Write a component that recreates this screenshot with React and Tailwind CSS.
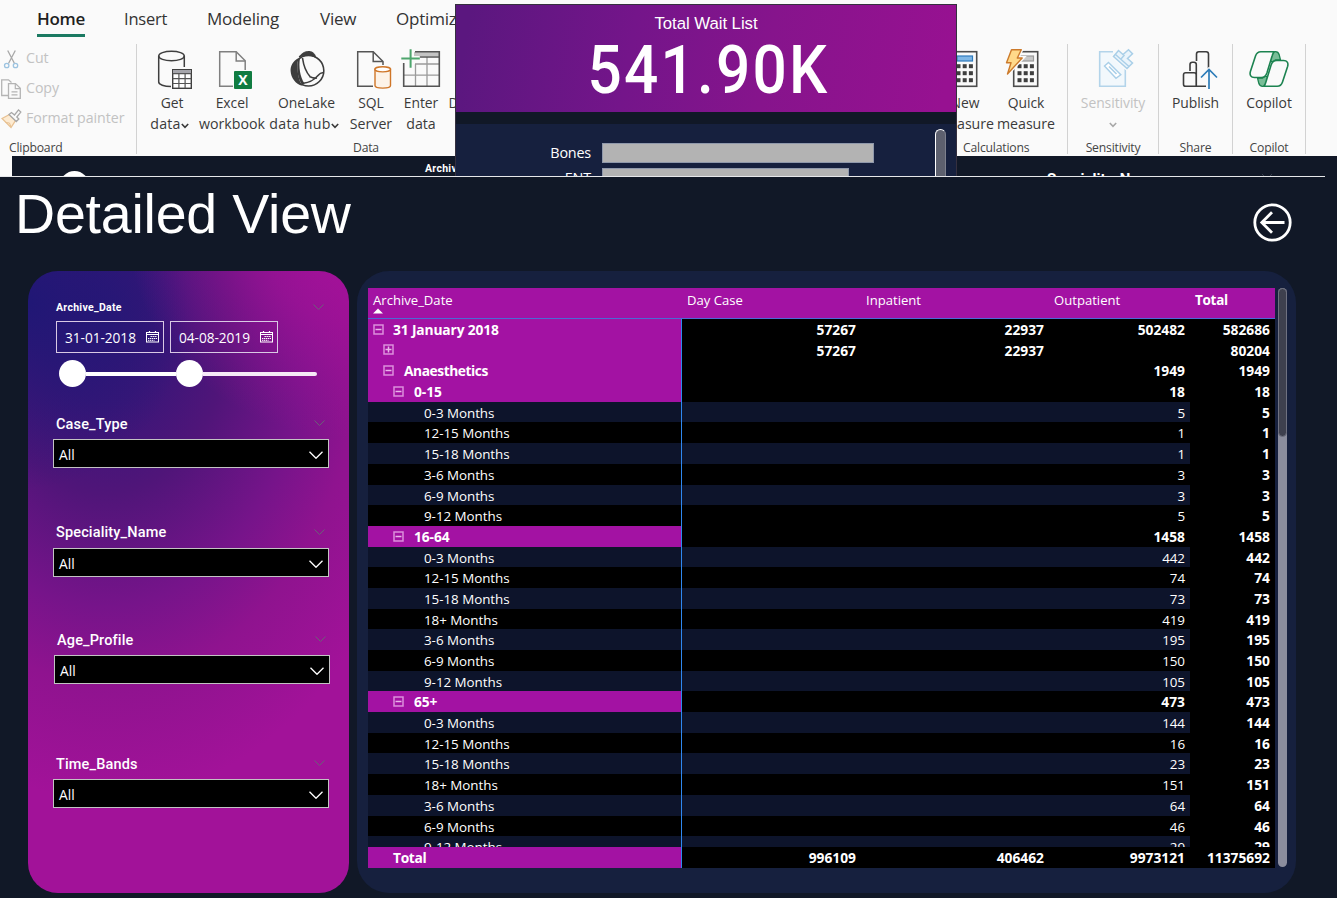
import React from "react";

const RIBBON_FONT = "font-['Open_Sans','Noto_Sans',sans-serif]";
const DIN_FONT = "font-['Roboto','Open_Sans',sans-serif]";

function Icon({ children, size = 40, className = "" }) {
  return (
    <svg width={size} height={size} viewBox={`0 0 ${size} ${size}`} fill="none" className={`shrink-0 overflow-visible ${className}`}>
      {children}
    </svg>
  );
}

function CutIcon() {
  return (
    <Icon size={20}>
      <path d="M6.700 1.500 13.500 14.500M14.300 1.500 7.500 14.500" stroke="#a8a8a8" strokeWidth="1.300" />
      <circle cx="5.700" cy="16.500" r="2.200" stroke="#9cc3e0" strokeWidth="1.300" />
      <circle cx="14.500" cy="16.500" r="2.200" stroke="#9cc3e0" strokeWidth="1.300" />
    </Icon>
  );
}

function CopyIcon() {
  return (
    <Icon size={20}>
      <path d="M7.500 16.500H.7V.8h6.800l3 2.600" stroke="#b4b4b4" strokeWidth="1.300" />
      <path d="M7.500 4.600h7l4.800 4.700v10H7.500z" fill="#fafafa" stroke="#b4b4b4" strokeWidth="1.300" />
      <path d="M14.300 4.800v4.800h4.900M10.500 12.800h6M10.500 15.800h6" stroke="#b4b4b4" strokeWidth="1.200" />
    </Icon>
  );
}

function BrushIcon() {
  return (
    <Icon size={20}>
      <path d="M1 9.500 8.500 5.500l6 6-4.500 7z" fill="#fdebd2" stroke="#e8c192" strokeWidth="1.300" />
      <path d="m4.500 13.500 4 .500 1.500 4" stroke="#e8c192" />
      <path d="m8 5.500 2.500-2 3 2.500L17.500.9l2.300 2.200-4 4.900 2 2-2.500 2.500z" fill="#fafafa" stroke="#a8a8a8" strokeWidth="1.300" />
    </Icon>
  );
}

function GetDataIcon() {
  return (
    <Icon>
      <path d="M19 37.500C12 37.500 6.700 35.500 6.700 33V7M32.300 7v11" stroke="#3f3f3f" strokeWidth="1.500" />
      <ellipse cx="19.500" cy="7" rx="12.800" ry="4.800" stroke="#3f3f3f" strokeWidth="1.500" />
      <rect x="20.700" y="20.700" width="18.600" height="18.600" fill="#fff" stroke="#3f3f3f" strokeWidth="1.400" />
      <path d="M21 21h18v3.500H21z" fill="#a5a5ab" />
      <path d="M20.700 24.700h18.600M20.700 29.600h18.600M20.700 34.500h18.600M26.900 24.700v14.500M33.100 24.700v14.500" stroke="#555" strokeWidth="1.200" />
    </Icon>
  );
}

function ExcelIcon() {
  return (
    <Icon>
      <path d="M21 37.300H7.700V2.700h16.500l9 9V21" stroke="#808080" strokeWidth="1.500" />
      <path d="M24.200 2.700v9.200h9" stroke="#808080" strokeWidth="1.500" />
      <rect x="22" y="22" width="18" height="18" rx="1" fill="#107c41" />
      <text x="31" y="36" textAnchor="middle" fill="#fff" fontFamily="Open Sans" fontWeight="700" fontSize="14">X</text>
    </Icon>
  );
}

function OneLakeIcon() {
  return (
    <Icon>
      <path d="M11 9.500C6 12 3.300 17 3.600 22c.3 7 5 13 11.500 14.800-3.800-5.600-5.600-17.600-4.100-27.300z" fill="#3d3d3d" />
      <path d="M12 8C15 4 18 2.500 22 2.500c4 0 6.500 3 6.500 6-4-3-11-3-16.500-.500z" fill="#3d3d3d" stroke="#3d3d3d" />
      <circle cx="21.500" cy="21.700" r="15.300" stroke="#3d3d3d" strokeWidth="1.600" />
      <path d="M11 10c-1.500 9-.5 20 4.500 26.500l2-2C13 28 11.500 18 13 9z" fill="#3d3d3d" />
      <path d="M15.500 9c1 7 3 13.500 7.500 18.500M15 34.500c9-1 12.500-4 16-8 2-2.200 3.300-3.500 5.800-2.500M22.500 27.500c2 1 4.500 2 7.500 1.500" stroke="#3d3d3d" strokeWidth="1.600" />
    </Icon>
  );
}

function SqlIcon() {
  return (
    <Icon>
      <path d="M22 37.300H6.700V2.700h15.500L32 12.500V16" stroke="#555" strokeWidth="1.500" />
      <path d="M22.200 2.700v9.800H32" stroke="#555" strokeWidth="1.500" />
      <path d="M24 20.300v16.200c0 3.500 15.500 3.500 15.500 0V20.300z" fill="#fdf3e8" stroke="#cf7628" strokeWidth="1.400" />
      <ellipse cx="31.700" cy="20.300" rx="7.800" ry="2.600" fill="#fff" stroke="#cf7628" strokeWidth="1.400" />
    </Icon>
  );
}

function EnterDataIcon() {
  return (
    <Icon>
      <path d="M13 3h25v4H13z" fill="#c4c4c4" />
      <path d="M14 15h24M3 26.200h35M14.500 15v22.500M26 8v29.500" stroke="#9b9b9b" strokeWidth="1.300" />
      <path d="M14 2.700h24.300v34.600H2.700V14M13 8h25" stroke="#555" strokeWidth="1.600" />
      <path d="M9.600.3v18.500M.3 9.600h18.500" stroke="#fafafa" strokeWidth="5" />
      <path d="M9.600.3v18.500M.3 9.600h18.500" stroke="#4ea56d" strokeWidth="2" />
    </Icon>
  );
}

function CalculatorShape({ blue }) {
  return (
    <>
      <rect x="7.700" y="2.700" width="24" height="34.600" fill="#fafafa" stroke="#4c4c4c" strokeWidth="1.600" />
      <rect x="12" y="7" width="15.500" height="5" fill={blue ? "#7fb7e6" : "#c8c8c8"} stroke={blue ? "#2f7bbd" : "#9a9a9a"} strokeWidth="1.200" />
      {[15.200, 22.200, 29.200].map((y) =>
        [11.500, 17.700, 23.900].map((x) => <rect key={`${x}-${y}`} x={x} y={y} width="4" height="4" fill="#3f3f3f" />)
      )}
    </>
  );
}

function NewMeasureIcon() {
  return (
    <Icon>
      <CalculatorShape blue />
    </Icon>
  );
}

function QuickMeasureIcon() {
  return (
    <Icon>
      <CalculatorShape />
      <path d="M5.500.7h9.800l-4 8.300h4.900L1.500 25 5 13.700H.5z" fill="#fafafa" stroke="#fafafa" strokeWidth="4" />
      <path d="M5.500.7h9.800l-4 8.300h4.900L1.500 25 5 13.700H.5z" fill="#ffd98a" stroke="#cc7a2b" strokeWidth="1.400" strokeLinejoin="round" />
    </Icon>
  );
}

function SensitivityIcon() {
  return (
    <Icon>
      <path d="M20 2.700H6.700v34.600h25.600V20" stroke="#b3d4ea" strokeWidth="1.600" fill="#f2f8fc" />
      <path d="m15.500 13.500 12.300 12.200-4.800 3.500L11.500 17z" fill="#fff" stroke="#a9cfe8" strokeWidth="1.400" />
      <path d="m16 17.500 7.500 7.500" stroke="#a9cfe8" strokeWidth="1.600" />
      <path d="M20.500 7.500 34 19.500l5.500-5.500-5-4.500 5-4.800L35.500.8 30 5.500 25.500 1.500z" fill="#fafafa" stroke="#fafafa" strokeWidth="4" />
      <path d="M20.500 7.500 34 19.500l5.500-5.500-5-4.500 5-4.800L35.500.8 30 5.500 25.500 1.500z" fill="#eaf4fb" stroke="#a9cfe8" strokeWidth="1.500" />
      <path d="m22.500 5.500 13.500 12M27.500 10.500l4-4.500" stroke="#a9cfe8" strokeWidth="1.400" />
    </Icon>
  );
}

function PublishIcon() {
  return (
    <Icon>
      <path d="M20.500 12V5c0-1.500.8-2.300 2.300-2.300h7.400c1.500 0 2.300.8 2.300 2.300v15M14 22V15.500c0-1.500.8-2.300 2.300-2.300H18c1.500 0 2.300.8 2.300 2.300V37.300M20.200 37.300V25.800c0-1.300-.8-2.100-2.200-2.100H9.700c-1.400 0-2.200.8-2.200 2.100v9.400c0 1.300.8 2.100 2.200 2.100H30" stroke="#3d3d3d" strokeWidth="1.600" />
      <path d="M33 40V21M25 28.500l8-8 8 8" stroke="#fafafa" strokeWidth="4" />
      <path d="M33 40V21M25 28.500l8-8 8 8" stroke="#2d7cb8" strokeWidth="1.700" />
    </Icon>
  );
}

function CopilotIcon() {
  return (
    <Icon>
      <path d="M20.500 11.500 23 2.700h3.500c2 0 3 .8 3.700 3l1.300 5.300h-5l-3 2z" fill="#79bd97" stroke="#1c8350" strokeWidth="1.300" />
      <path d="M19.500 28.500 17 37.300h-3.500c-2 0-3-.8-3.700-3L8.500 29h5l3-2z" fill="#79bd97" stroke="#1c8350" strokeWidth="1.300" />
      <path d="M25.500 2.700H11.800C9 2.700 7.500 4 6.500 7L1.400 22.500c-1 3.500.5 6 4 6h7c3 0 4.500-1.500 5.500-4.500l5.200-17c.7-2.500 1.100-3.800 2.400-4.300z" fill="#fafafa" stroke="#1c8350" strokeWidth="1.600" />
      <path d="M14.500 37.300h13.700c2.800 0 4.300-1.300 5.300-4.300l5.100-15.500c1-3.500-.5-6-4-6h-7c-3 0-4.500 1.500-5.500 4.500l-5.200 17c-.7 2.500-1.100 3.800-2.400 4.300z" fill="#fafafa" stroke="#1c8350" strokeWidth="1.600" />
    </Icon>
  );
}

function Caret({ className = "" }) {
  return (
    <svg width="8" height="6" viewBox="0 0 8 6" fill="none" className={`shrink-0 ${className}`}>
      <path d="M.8 1 4 4.300 7.200 1" stroke="currentColor" strokeWidth="1.600" />
    </svg>
  );
}

function RibbonItem({ icon, line1, line2, caret, width, muted }) {
  return (
    <div className={`flex shrink-0 flex-col items-center ${width} ${muted ? "text-[#c2c2c2]" : "text-[#3a3a3a]"}`}>
      {icon}
      <span className="mt-[3px] h-[21px] text-[13.9px] leading-[21px] tracking-[-0.05px] whitespace-nowrap">{line1}</span>
      <span className={`mt-px flex h-[20px] items-center text-[14.2px] leading-[20px] whitespace-nowrap ${caret && !muted ? "-ml-[5px] tracking-[0.25px]" : "tracking-[-0.02px]"}`}>
        {line2}
        {caret && <Caret className={muted ? "mt-px text-[#a8a8a8]" : "mt-[4px]"} />}
      </span>
    </div>
  );
}

function RibbonGroup({ width, label, children, labelClass = "text-center" }) {
  return (
    <div className={`flex h-[110px] shrink-0 flex-col border-r border-[#d2d2d2] ${width}`}>
      <div className="flex h-[94px] pt-[5px]">{children}</div>
      <div className={`h-[16px] text-[12.2px] leading-[19px] tracking-[-0.2px] whitespace-nowrap text-[#444] ${labelClass}`}>{label}</div>
    </div>
  );
}

function ClipboardRow({ icon, text }) {
  return (
    <div className="flex h-[30px] items-center gap-[5px] pl-px text-[14.2px] tracking-[-0.05px] whitespace-nowrap text-[#c2c2c2]">
      {icon}
      <span className="pb-[2px]">{text}</span>
    </div>
  );
}

function Ribbon() {
  return (
    <div className={`flex h-[156px] flex-col bg-[#fafafa] ${RIBBON_FONT}`}>
      <div className="flex h-[44px] pl-[37px] text-[17px] leading-[38px] tracking-[-0.2px] text-[#333]">
        <div className="flex w-[87px] flex-col">
          <span className="h-[34px] font-semibold tracking-[-0.3px] text-[#1f1f1f]">Home</span>
          <span className="h-[3px] w-[48px] bg-[#1b7a62]" />
        </div>
        <span className="w-[83px] text-[16.5px]">Insert</span>
        <span className="w-[113px]">Modeling</span>
        <span className="w-[76px]">View</span>
        <span>Optimize</span>
      </div>
      <div className="flex">
        <RibbonGroup width="w-[137px]" label="Clipboard" labelClass="pl-[9px]">
          <div className="-mt-[5px] flex flex-col">
            <ClipboardRow icon={<CutIcon />} text="Cut" />
            <ClipboardRow icon={<CopyIcon />} text="Copy" />
            <ClipboardRow icon={<BrushIcon />} text="Format painter" />
          </div>
        </RibbonGroup>
        <RibbonGroup width="w-[743px]" label="Data" labelClass="pl-[216px]">
          <div className="w-[5px]" />
          <RibbonItem width="w-[60px]" icon={<GetDataIcon />} line1="Get" line2="data" caret />
          <RibbonItem width="w-[60px]" icon={<ExcelIcon />} line1="Excel" line2="workbook" />
          <RibbonItem width="w-[89px]" icon={<OneLakeIcon />} line1="OneLake" line2="data hub" caret />
          <RibbonItem width="w-[40px]" icon={<SqlIcon />} line1="SQL" line2="Server" />
          <RibbonItem width="w-[60px]" icon={<EnterDataIcon />} line1="Enter" line2="data" />
          <RibbonItem width="w-[60px]" icon={<Icon />} line1="Dataverse" line2="" />
        </RibbonGroup>
        <RibbonGroup width="w-[188px]" label="Calculations" labelClass="pl-[83px]">
          <div className="w-[55px]" />
          <RibbonItem width="w-[60px]" icon={<NewMeasureIcon />} line1="New" line2="measure" />
          <RibbonItem width="w-[62px]" icon={<QuickMeasureIcon />} line1="Quick" line2="measure" />
        </RibbonGroup>
        <RibbonGroup width="w-[91px]" label="Sensitivity">
          <RibbonItem width="w-[90px]" icon={<SensitivityIcon />} line1="Sensitivity" line2="" caret muted />
        </RibbonGroup>
        <RibbonGroup width="w-[74px]" label="Share">
          <RibbonItem width="w-[73px]" icon={<PublishIcon />} line1="Publish" line2="" />
        </RibbonGroup>
        <RibbonGroup width="w-[73px]" label="Copilot">
          <RibbonItem width="w-[72px]" icon={<CopilotIcon />} line1="Copilot" line2="" />
        </RibbonGroup>
      </div>
    </div>
  );
}

function ReportStrip() {
  return (
    <div className={`flex h-[21px] flex-col bg-[#111827] ${DIN_FONT}`}>
      <div className="flex h-[20px] overflow-hidden">
        <div className="w-[12px] shrink-0 bg-[#fafafa]" />
        <div className="mt-[15px] ml-[48px] h-[30px] w-[29px] shrink-0 rounded-full bg-white" />
        <span className="w-[622px] shrink-0 pl-[336px] text-[10.5px] leading-[25px] font-bold tracking-[0.3px] text-white">Archive_Date</span>
        <span className="mt-[12px] ml-[336px] w-[214px] shrink-0 text-[15px] leading-[22px] font-bold text-white">Speciality_Name</span>
        <svg width="12" height="8" viewBox="0 0 12 8" fill="none" className="mt-[16px]">
          <path d="m1 2 5 5 5-5" stroke="#3a4150" />
        </svg>
      </div>
      <div className="h-px w-[1325px] bg-[#e6e7ea]" />
    </div>
  );
}

function WaitListCard() {
  return (
    <div className="absolute top-[4px] left-[455px] flex h-[172px] w-[502px] flex-col overflow-hidden border-x border-t border-[#35303f] bg-[#16203e]">
      <div className="flex h-[107px] shrink-0 flex-col items-center bg-linear-[100deg,#5b177f_3%,#74158a_35%,#86148c_62%,#971191_97%] text-white">
        <span className="mt-[9px] font-['Liberation_Sans',Arial,sans-serif] text-[16.8px] leading-[20px] tracking-[-0.05px]">Total Wait List</span>
        <span className={`-mt-px ml-[5px] scale-x-[0.9] text-[67px] leading-[74px] font-medium tracking-[2.500px] whitespace-nowrap ${DIN_FONT}`}>541.90K</span>
      </div>
      <div className="h-[12px] shrink-0 bg-[#111827]" />
      <div className={`flex text-[14.4px] leading-[20px] text-white ${RIBBON_FONT}`}>
        <div className="flex w-[479px] shrink-0 flex-col gap-[5px] pt-[19px]">
          <div className="flex h-[20px] shrink-0 gap-[11px]">
            <span className="w-[135px] text-right tracking-[-0.2px]">Bones</span>
            <span className="h-[20px] w-[272px] border border-[#8f98ab] bg-[#b3b3b3]" />
          </div>
          <div className="flex h-[20px] shrink-0 gap-[11px]">
            <span className="w-[135px] text-right tracking-[-0.2px]">ENT</span>
            <span className="h-[20px] w-[247px] border border-[#8f98ab] bg-[#b3b3b3]" />
          </div>
        </div>
        <div className="mt-[5px] h-[80px] w-[11px] rounded-t-full border border-white border-r-[#7d808d] bg-[#5d606e]" />
      </div>
    </div>
  );
}

function Chevron({ className = "" }) {
  return (
    <svg width="14" height="8" viewBox="0 0 14 8" fill="none" className={`shrink-0 ${className}`}>
      <path d="m.5.8 6.500 6.500L13.500.8" stroke="currentColor" strokeWidth="1.300" />
    </svg>
  );
}

function FaintChevron() {
  return (
    <svg width="11" height="6" viewBox="0 0 11 6" fill="none" className="shrink-0 text-[#6b5f78]">
      <path d="m.5.500 5 5 5-5" stroke="currentColor" />
    </svg>
  );
}

function CalendarIcon() {
  return (
    <svg width="13" height="12" viewBox="0 0 13 12" fill="none" className="shrink-0">
      <rect x=".5" y="1.500" width="12" height="9.500" stroke="#fff" />
      <path d="M.5 3.500h12M3.500 0v2M9.500 0v2" stroke="#fff" strokeWidth="1.200" />
      <path d="M4.500 5.500h6.500M2 7.500h9M2 9.300h6.500" stroke="#fff" strokeDasharray="1.400 .6" strokeWidth="1" />
    </svg>
  );
}

function DateInput({ value }) {
  return (
    <div className="flex h-[32px] w-[108px] items-center justify-between border border-[#d9c9e4] pr-[4px] pl-[8px] text-[13.7px] tracking-[-0.05px]">
      <span className="pt-[3px]">{value}</span>
      <CalendarIcon />
    </div>
  );
}

function Slicer({ label, className, labelClass = "leading-[29px]" }) {
  return (
    <div className={`flex w-[276px] flex-col ${className}`}>
      <div className="flex h-[29px] justify-between pr-[4px] pl-[3px]">
        <span className={`text-[14.5px] font-medium tracking-[0.15px] ${labelClass} ${DIN_FONT}`}>{label}</span>
        <span className="pt-[10px]">
          <FaintChevron />
        </span>
      </div>
      <div className="flex h-[29px] items-center justify-between border border-[#c3c3c3] bg-black pr-[5px] pl-[5px] text-[13.8px]">
        <span className="pt-[4px]">All</span>
        <Chevron className="mt-[2px]" />
      </div>
    </div>
  );
}

function FilterPanel() {
  return (
    <div className={`flex h-[622px] w-[321px] shrink-0 flex-col rounded-[30px] bg-[radial-gradient(ellipse_72%_32%_at_104%_-5%,#a7119aff_0%,#a7119ab0_42%,#a7119a00_100%),radial-gradient(ellipse_50%_30%_at_0%_5%,#201775ff_0%,#20177500_100%),radial-gradient(ellipse_106%_78%_at_24%_7%,#2c1777_0%,#381678_18%,#501579_37%,#76148a_60%,#8f138f_76%,#a21299_100%)] pl-[25px] text-white ${RIBBON_FONT}`}>
      <div className="flex h-[50px] w-[271px] justify-between pt-[30px] pl-[3px]">
        <span className={`text-[10.5px] leading-[13px] font-bold tracking-[0.3px] ${DIN_FONT}`}>Archive_Date</span>
        <span className="mt-[3px]">
          <FaintChevron />
        </span>
      </div>
      <div className="flex gap-[6px] pl-[3px]">
        <DateInput value="31-01-2018" />
        <DateInput value="04-08-2019" />
      </div>
      <div className="mt-[7px] ml-[6px] flex h-[27px] w-[258px] items-center">
        <span className="h-[27px] w-[27px] shrink-0 rounded-full bg-white" />
        <span className="h-[4px] w-[90px] bg-white" />
        <span className="h-[27px] w-[27px] shrink-0 rounded-full bg-white" />
        <span className="h-[4px] flex-1 rounded-r-full bg-[#f6e9f7]" />
      </div>
      <Slicer label="Case_Type" className="mt-[23px]" />
      <Slicer label="Speciality_Name" className="mt-[51px]" labelClass="leading-[27px]" />
      <Slicer label="Age_Profile" className="mt-[49px] ml-px" />
      <Slicer label="Time_Bands" className="mt-[66px]" />
    </div>
  );
}

const months = (entries) => entries.map(([label, value], i) => ({ level: 3, label: `${label} Months`, out: value, total: value, navy: i % 2 === 0 }));

const ROWS = [
  { level: 0, toggle: "minus", label: "31 January 2018", day: "57267", inp: "22937", out: "502482", total: "582686" },
  { level: 1, toggle: "plus", label: "", day: "57267", inp: "22937", total: "80204" },
  { level: 1, toggle: "minus", label: "Anaesthetics", out: "1949", total: "1949" },
  { level: 2, toggle: "minus", label: "0-15", out: "18", total: "18" },
  ...months([["0-3", "5"], ["12-15", "1"], ["15-18", "1"], ["3-6", "3"], ["6-9", "3"], ["9-12", "5"]]),
  { level: 2, toggle: "minus", label: "16-64", out: "1458", total: "1458" },
  ...months([["0-3", "442"], ["12-15", "74"], ["15-18", "73"], ["18+", "419"], ["3-6", "195"], ["6-9", "150"], ["9-12", "105"]]),
  { level: 2, toggle: "minus", label: "65+", out: "473", total: "473" },
  ...months([["0-3", "144"], ["12-15", "16"], ["15-18", "23"], ["18+", "151"], ["3-6", "64"], ["6-9", "46"], ["9-12", "29"]]),
];

const INDENT = ["gap-[9px] pl-[5px] tracking-[-0.15px]", "gap-[10px] pl-[15px] tracking-[-0.45px]", "gap-[10px] pl-[25px] tracking-[-0.1px]", "pl-[56px]"];
const COLS = "grid grid-cols-[314px_179px_188px_141px_85px]";

function Toggle({ kind }) {
  return (
    <svg width="11" height="11" viewBox="0 0 11 11" fill="none" className="mb-px shrink-0">
      <rect x="1" y="1" width="9" height="9" fill="#a312a3" stroke="#dc8fdc" strokeWidth="1.500" />
      <path d={kind === "plus" ? "M2.500 5.500h6M5.500 2.500v6" : "M2.500 5.500h6"} stroke="#e9b5e9" strokeWidth="1.500" />
    </svg>
  );
}

function MatrixRow({ row }) {
  const leaf = row.level === 3;
  return (
    <div className={`${COLS} h-[20.7px] shrink-0 text-right leading-[22px] ${leaf ? "text-[13.4px] tracking-[-0.04px]" : "text-[13.8px] font-bold"} ${row.navy ? "bg-[#0d142b]" : "bg-black"}`}>
      <div className={`flex items-center text-left shadow-[inset_-1px_0_0_#2f88f0] ${INDENT[row.level]} ${leaf ? "" : "border-b border-b-[#8c1290] bg-[#a312a3]"}`}>
        {row.toggle && <Toggle kind={row.toggle} />}
        <span className="whitespace-nowrap">{row.label}</span>
      </div>
      <div className="pr-[5px]">{row.day}</div>
      <div className="pr-[5px]">{row.inp}</div>
      <div className="pr-[5px]">{row.out}</div>
      <div className="bg-black pr-[5px] text-[13.8px] font-bold tracking-normal">{row.total}</div>
    </div>
  );
}

function Matrix() {
  return (
    <div className="flex h-[580px] w-[907px] flex-col overflow-hidden bg-black text-white">
      <div className={`${COLS} h-[31px] shrink-0 border-b border-[#4a6ad4] bg-[#a312a3] text-[13.1px] leading-[24px]`}>
        <div className="flex flex-col pl-[5px]">
          <span className="h-[20px]">Archive_Date</span>
          <svg width="10" height="6" viewBox="0 0 10 6">
            <path d="M0 5.500 5 .500l5 5z" fill="#fff" />
          </svg>
        </div>
        <span className="pl-[5px]">Day Case</span>
        <span className="pl-[5px]">Inpatient</span>
        <span className="pl-[5px]">Outpatient</span>
        <span className="pl-[5px] text-[13.5px] font-bold tracking-[-0.3px]">Total</span>
      </div>
      <div className="flex h-[528px] shrink-0 flex-col overflow-hidden">
        {ROWS.map((row, i) => (
          <MatrixRow key={i} row={row} />
        ))}
      </div>
      <div className={`${COLS} h-[21px] shrink-0 text-right text-[13.8px] leading-[22px] font-bold`}>
        <div className="border-b border-b-[#7f1290] bg-[#a312a3] pl-[25px] text-left tracking-[-0.35px] shadow-[inset_-1px_0_0_#2f88f0]">Total</div>
        <div className="pr-[5px]">996109</div>
        <div className="pr-[5px]">406462</div>
        <div className="pr-[5px]">9973121</div>
        <div className="pr-[5px]">11375692</div>
      </div>
    </div>
  );
}

function MatrixPanel() {
  return (
    <div className={`flex h-[622px] w-[939px] shrink-0 gap-[3px] rounded-[32px] bg-[#16203e] pt-[17px] pl-[11px] ${RIBBON_FONT}`}>
      <Matrix />
      <div className="h-[579px] w-[9px] rounded-full bg-[#8b8d9d]">
        <div className="h-[149px] rounded-full border border-[#6f7180] bg-[#3e404e]" />
      </div>
    </div>
  );
}

export default function App() {
  return (
    <div className="flex h-[898px] w-[1337px] flex-col overflow-hidden bg-[#111827]">
      <div className="relative flex h-[177px] shrink-0 flex-col overflow-hidden">
        <Ribbon />
        <ReportStrip />
        <WaitListCard />
      </div>
      <div className="flex h-[94px] shrink-0 items-start justify-between pr-[45px] pl-[15px]">
        <h1 className="pt-[6px] font-['Liberation_Sans',Arial,sans-serif] text-[55.5px] leading-[62px] tracking-[-0.2px] whitespace-nowrap text-white">Detailed View</h1>
        <svg width="40" height="40" viewBox="0 0 40 40" fill="none" className="mt-[25px]">
          <circle cx="20.500" cy="20.500" r="17.700" stroke="#fff" strokeWidth="2.800" />
          <path d="M32.500 20.500H10M20 10.200 9.800 20.500 20 30.800" stroke="#fff" strokeWidth="2.800" />
        </svg>
      </div>
      <div className="flex gap-[8px] pl-[28px]">
        <FilterPanel />
        <MatrixPanel />
      </div>
    </div>
  );
}
